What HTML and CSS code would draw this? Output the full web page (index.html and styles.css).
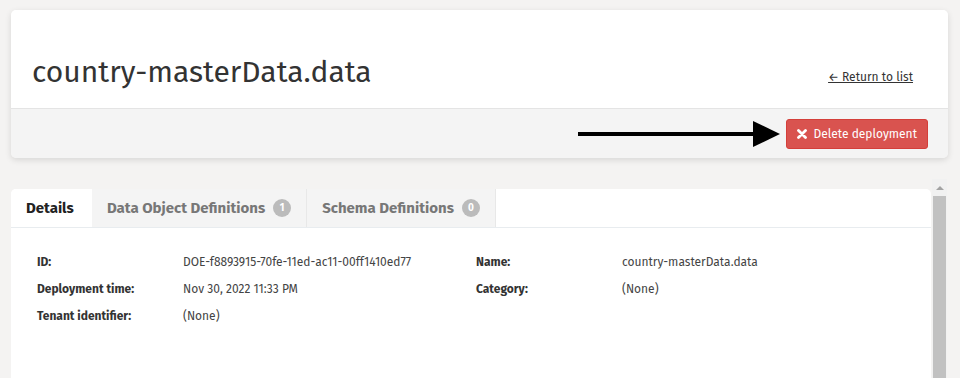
FILE: index.html
```html
<!DOCTYPE html>
<html lang="en">
<head>
    <meta charset="UTF-8">
    <title>country-masterData.data</title>
    <link rel="stylesheet" href="styles.css">
</head>
<body>

    <div class="page">
        <div class="header-card">
            <div class="header-top">
                <h1 class="title">country-masterData.data</h1>
                <a class="back-link" href="#">&larr; Return to list</a>
            </div>
            <div class="header-actions">
                <svg class="pointer" width="202" height="26" viewBox="0 0 202 26">
                    <rect x="0" y="11" width="178" height="4" fill="#000"/>
                    <polygon points="175,0 202,13 175,26" fill="#000"/>
                </svg>
                <button class="delete-btn">
                    <svg class="x-icon" width="10" height="10" viewBox="0 0 10 10">
                        <path d="M1.5 1.5 L8.5 8.5 M8.5 1.5 L1.5 8.5" stroke="#fff" stroke-width="2.8" stroke-linecap="round"/>
                    </svg>
                    Delete deployment
                </button>
            </div>
        </div>

        <div class="scroll-area">
            <div class="detail-card">
                <ul class="tabs">
                    <li class="tab active">Details</li>
                    <li class="tab">Data Object Definitions <span class="badge">1</span></li>
                    <li class="tab">Schema Definitions <span class="badge">0</span></li>
                </ul>
                <div class="details">
                    <div class="label">ID:</div>
                    <div class="value">DOE-f8893915-70fe-11ed-ac11-00ff1410ed77</div>
                    <div class="label">Name:</div>
                    <div class="value">country-masterData.data</div>

                    <div class="label">Deployment time:</div>
                    <div class="value">Nov 30, 2022 11:33 PM</div>
                    <div class="label">Category:</div>
                    <div class="value">(None)</div>

                    <div class="label">Tenant identifier:</div>
                    <div class="value">(None)</div>
                </div>
            </div>
            <div class="scrollbar">
                <div class="scroll-up"></div>
                <div class="scroll-thumb"></div>
            </div>
        </div>
    </div>

</body>
</html>
```

FILE: styles.css
```css
* {
    box-sizing: border-box;
    font-family: "Fira Sans", Lato, "Open Sans", sans-serif;
}
body {
    margin: 0;
    background: #f4f3f2;
    color: #333;
}
.page {
    padding: 10px 12px 0 11px;
}
.header-card {
    width: 937px;
    border-radius: 5px;
    overflow: hidden;
    box-shadow: 0 2px 6px rgba(0, 0, 0, 0.12);
}
.header-top {
    background: white;
    height: 98px;
    padding: 0 35px 18px 21px;
    display: flex;
    justify-content: space-between;
    align-items: flex-end;
}
.title {
    margin: 0;
    font-size: 30px;
    font-weight: normal;
    color: #333;
    line-height: 36px;
}
.back-link {
    color: #333;
    font-size: 12px;
    margin-bottom: 6px;
}
.header-actions {
    background: #f4f4f4;
    border-top: 1px solid #e4e4e4;
    height: 50px;
    padding-right: 20px;
    display: flex;
    justify-content: flex-end;
    align-items: center;
}
.pointer {
    margin-right: 6px;
}
.delete-btn {
    background: #d9534f;
    border: 1px solid #d43f3a;
    border-radius: 3px;
    color: white;
    font-size: 12px;
    height: 30px;
    padding: 0 10px;
    cursor: pointer;
    display: flex;
    align-items: center;
    gap: 7px;
}
.scroll-area {
    margin-top: 21px;
    width: 937px;
    height: 199px;
    overflow: hidden;
    display: flex;
    align-items: flex-start;
}
.scrollbar {
    width: 15px;
    height: 100%;
    margin-left: 1px;
    background: #f1f1f1;
}
.scroll-up {
    height: 17px;
    display: flex;
    justify-content: center;
    align-items: center;
}
.scroll-up::before {
    content: "";
    border-left: 4px solid transparent;
    border-right: 4px solid transparent;
    border-bottom: 4px solid #a3a3a3;
}
.scroll-thumb {
    height: 300px;
    margin: 0 1px;
    background: #c1c1c1;
}
.detail-card {
    margin-top: 10px;
    width: 920px;
    height: 260px;
    background: white;
    border-radius: 5px 5px 0 0;
}
.tabs {
    list-style: none;
    margin: 0;
    padding: 0;
    display: flex;
    height: 39px;
    border-bottom: 1px solid #e8ecef;
}
.tab {
    padding: 0 15px;
    font-size: 15px;
    font-weight: bold;
    color: #777;
    background: #f4f4f4;
    border-right: 1px solid #e8e8e8;
    display: flex;
    align-items: center;
}
.tab.active {
    background: white;
    color: #222;
    width: 81px;
    border-right: none;
    border-top-left-radius: 5px;
}
.badge {
    display: inline-block;
    width: 18px;
    height: 18px;
    line-height: 18px;
    margin-left: 8px;
    border-radius: 50%;
    background: #bbb;
    color: white;
    font-size: 10px;
    text-align: center;
}
.details {
    display: grid;
    grid-template-columns: 146px 293px 146px 1fr;
    grid-auto-rows: 27px;
    align-items: center;
    padding: 20px 26px;
    font-size: 12px;
}
.label {
    font-weight: bold;
    color: #333;
}
.value {
    color: #444;
}
```
